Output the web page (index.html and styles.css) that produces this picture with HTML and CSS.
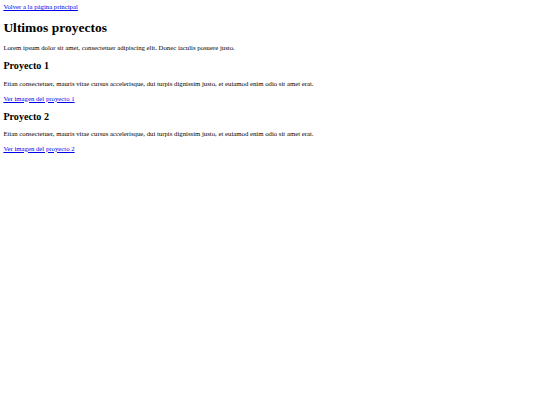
FILE: index.html
```html
<!DOCTYPE html>
<html>
<head>
    <title>Ultimos proyectos</title>
    <meta name="viewport" content="width=device-width, initial-scale=1.0">
    <link rel="stylesheet" href="styles.css">
</head>
<body>
    <a href="index.html">Volver a la página principal</a>

    <h1>Ultimos proyectos</h1>
    <p>Lorem ipsum dolor sit amet, consectetuer adipiscing elit. Donec iaculis posuere justo.</p>

    <div class="proyecto">
        <h2>Proyecto 1</h2>
        <p>Etian consectetuer, mauris vitae cursus accelerisque, dui turpis dignissim justo, et euiamod enim odio sit amet erat.</p>
        <p><a href="#">Ver imagen del proyecto 1</a></p>
    </div>

    <div class="proyecto">
        <h2>Proyecto 2</h2>
        <p>Etian consectetuer, mauris vitae cursus accelerisque, dui turpis dignissim justo, et euiamod enim odio sit amet erat.</p>
        <p><a href="#">Ver imagen del proyecto 2</a></p>
    </div>
</body>
</html>
```

FILE: styles.css
```css
body {
    font-family: "Liberation Serif", "Times New Roman", serif;
    font-size: 6.75px;
    line-height: 1.13;
    margin: 3.375px;
    color: #000;
    background-color: #fff;
}

a {
    color: #0000ee;
}

h1 {
    font-size: 2em;
    margin: 0.67em 0;
}

h2 {
    font-size: 1.5em;
    margin: 0.83em 0;
}

p {
    margin: 1em 0;
}
```
